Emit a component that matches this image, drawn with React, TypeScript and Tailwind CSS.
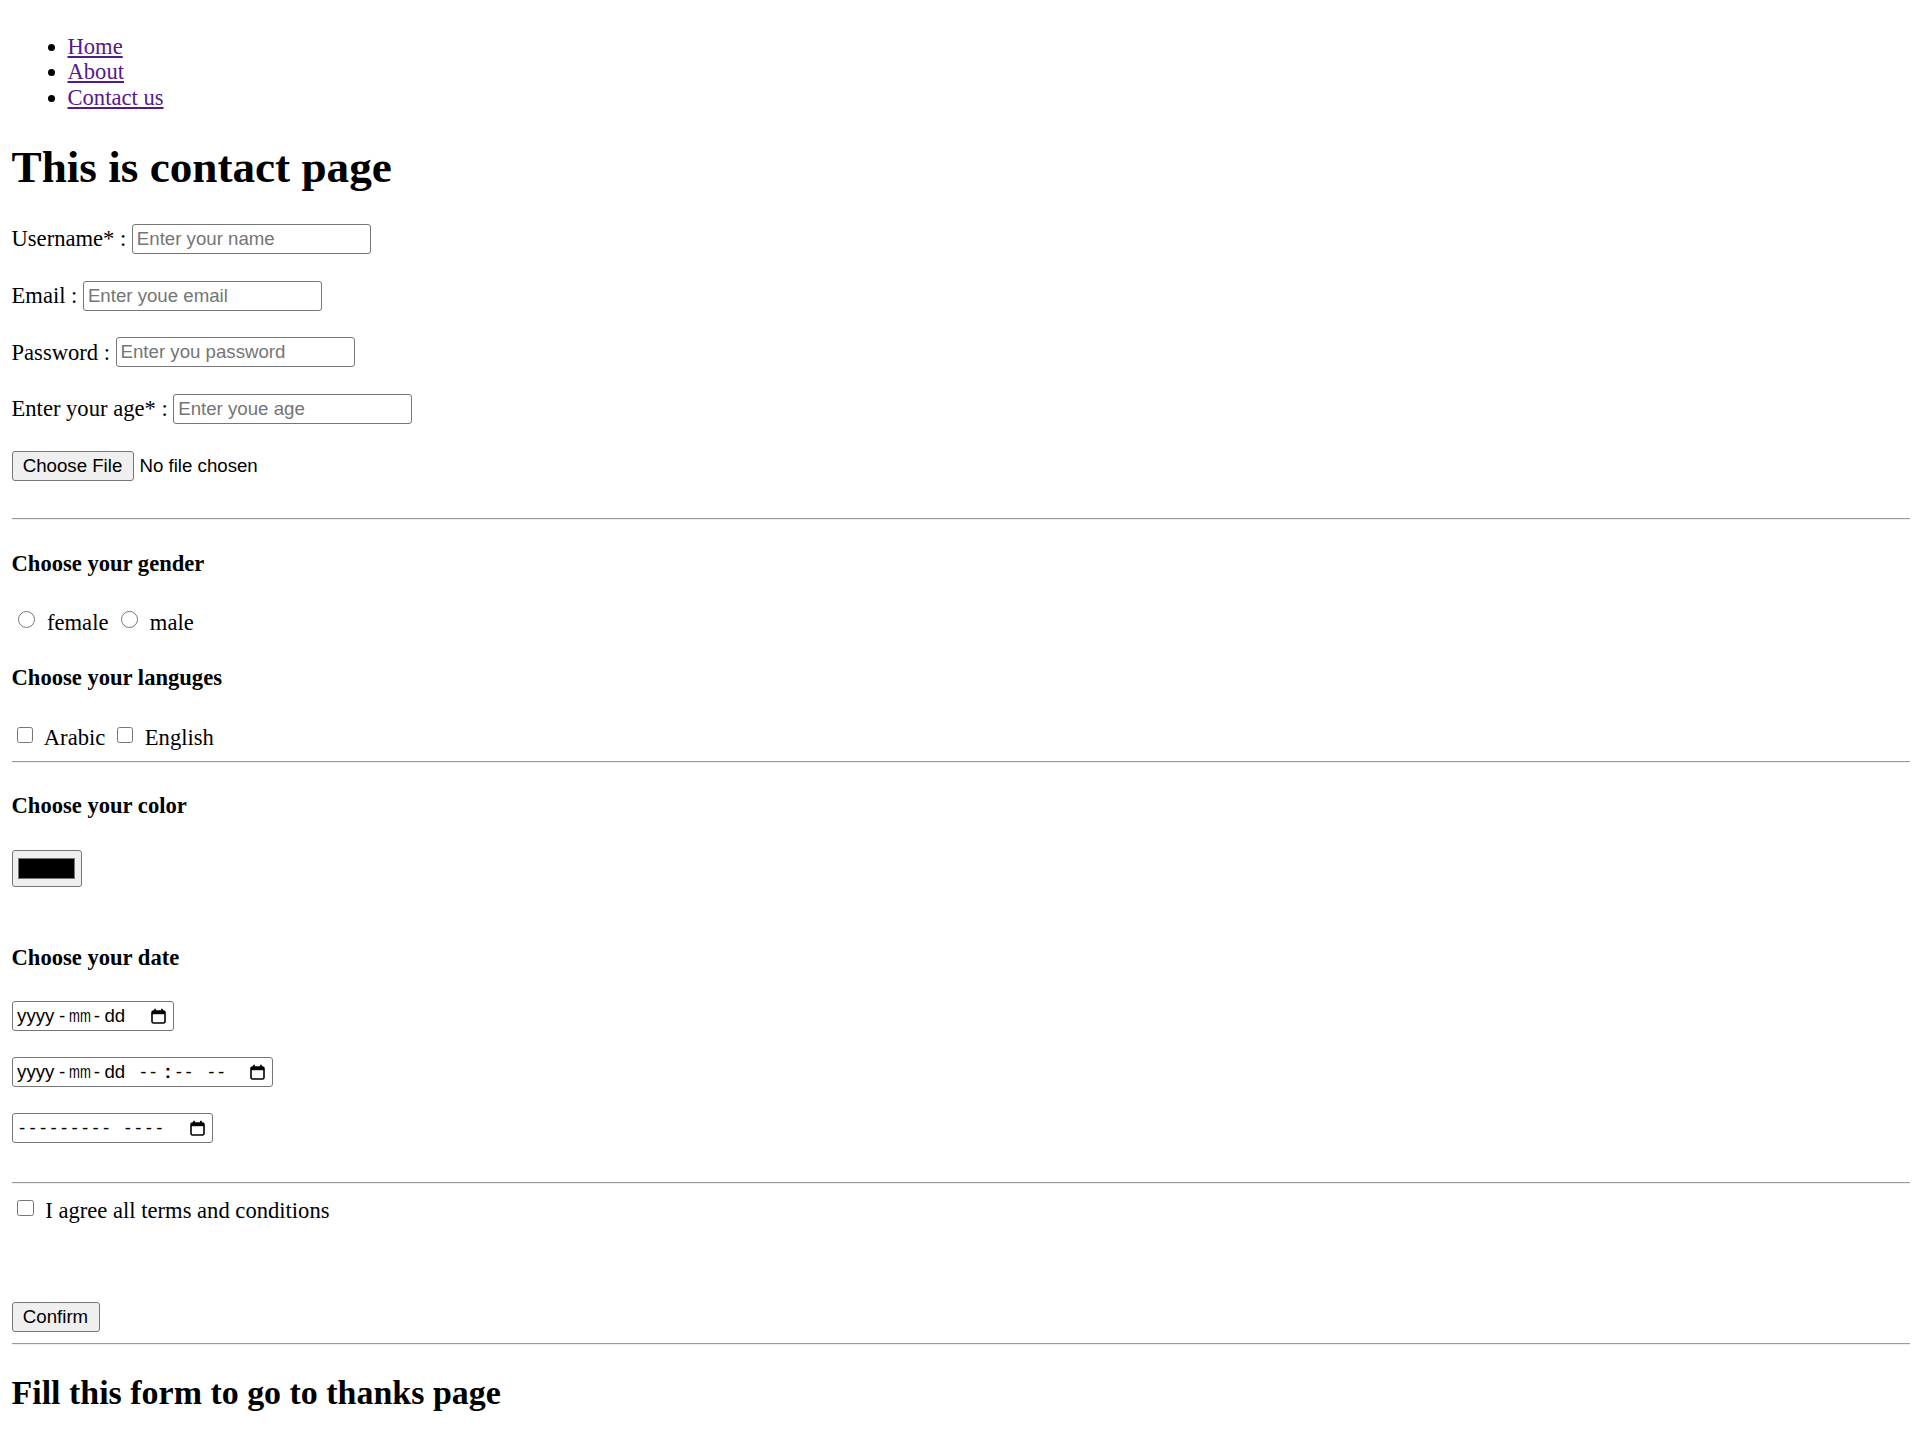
import React from "react";

// fonts: Times-like page text, Arial-like form controls
const sans = "font-['Liberation_Sans',Arial,sans-serif] text-[18.67px] text-black";
const field =
  "h-[30px] w-[239px] rounded-[3px] border border-[#767676] bg-white px-[4px] outline-none placeholder:text-[#757575] " +
  sans;
const heading = "font-bold leading-[25.7px]";
const rule = "h-[2px] w-full border-t border-b border-t-[#9a9a9a] border-b-[#eeeeee]";
const button = "rounded-[3px] border border-[#767676] bg-[#efefef] " + sans;
const check = "h-[16px] w-[16px] appearance-none rounded-[2.5px] border border-[#767676] bg-white";
const radio = "h-[16.7px] w-[16.7px] appearance-none rounded-full border border-[#767676] bg-white";
const dateBox = "flex h-[29.5px] items-center rounded-[3px] border border-[#767676] bg-white " + sans;

const CalendarIcon = () => (
  <svg width="15" height="16" viewBox="0 0 15 16" className="shrink-0">
    <rect x="1" y="3" width="13" height="12" rx="1.6" fill="none" stroke="#000" strokeWidth="1.6" />
    <rect x="1" y="3" width="13" height="3.2" fill="#000" />
    <rect x="3.2" y="0.8" width="1.7" height="3" fill="#000" />
    <rect x="10.1" y="0.8" width="1.7" height="3" fill="#000" />
  </svg>
);

const Ymd = () => (
  <>
    <span className="ml-[4.6px]">yyyy</span>
    <span className="ml-[4.5px]">-</span>
    <span className="ml-[3.5px] inline-block origin-left scale-x-[0.7]">mm</span>
    <span className="ml-[-6px]">-</span>
    <span className="ml-[4.5px]">dd</span>
  </>
);

export default function App() {
  return (
    <div className="min-h-screen bg-white px-[11.5px] pb-[40px] font-['Liberation_Serif','Times_New_Roman',serif] text-[22.6px] leading-[25.7px] text-black">
      <div className="flex flex-col items-start">
        <ul className="mt-[33.6px] list-disc pl-[56px] leading-[25.7px]">
          <li>
            <a href="#" className="text-[#551a8b] underline">Home</a>
          </li>
          <li>
            <a href="#" className="text-[#551a8b] underline">About</a>
          </li>
          <li>
            <a href="#" className="text-[#551a8b] underline">Contact us</a>
          </li>
        </ul>

        <h1 className="mt-[31.7px] text-[45.2px] font-bold leading-[51.5px]">This is contact page</h1>

        <div className="mt-[30.4px] flex h-[30px] items-center">
          <span>Username* :</span>
          <input className={`ml-[5.5px] ${field}`} placeholder="Enter your name" />
        </div>
        <div className="mt-[26.6px] flex h-[30px] items-center">
          <span>Email :</span>
          <input className={`ml-[5.5px] ${field}`} placeholder="Enter youe email" />
        </div>
        <div className="mt-[26.6px] flex h-[30px] items-center">
          <span>Password :</span>
          <input className={`ml-[5.5px] ${field}`} placeholder="Enter you password" type="password" />
        </div>
        <div className="mt-[26.6px] flex h-[30px] items-center">
          <span>Enter your age* :</span>
          <input className={`ml-[5.5px] ${field}`} placeholder="Enter youe age" />
        </div>
        <div className="mt-[26.6px] flex h-[30px] items-center">
          <button className={`h-[30px] w-[122px] ${button}`}>Choose File</button>
          <span className={`ml-[6px] ${sans}`}>No file chosen</span>
        </div>

        <hr className={`mt-[37.6px] ${rule}`} />

        <h4 className={`mt-[31px] ${heading}`}>Choose your gender</h4>
        <div className="mt-[32.6px] flex items-center">
          <input type="radio" name="gender" className={`mb-[6px] ml-[6.8px] ${radio}`} />
          <span className="ml-[12px]">female</span>
          <input type="radio" name="gender" className={`mb-[6px] ml-[13px] ${radio}`} />
          <span className="ml-[11.7px]">male</span>
        </div>

        <h4 className={`mt-[29.3px] ${heading}`}>Choose your languges</h4>
        <div className="mt-[34.3px] flex items-center">
          <input type="checkbox" className={`mb-[5px] ml-[5.8px] ${check}`} />
          <span className="ml-[10.5px]">Arabic</span>
          <input type="checkbox" className={`mb-[5px] ml-[12px] ${check}`} />
          <span className="ml-[11.5px]">English</span>
        </div>

        <hr className={`mt-[10.7px] ${rule}`} />

        <h4 className={`mt-[29.9px] ${heading}`}>Choose your color</h4>
        <button className="mt-[31.4px] flex h-[37.5px] w-[70px] items-center justify-center rounded-[3px] border border-[#767676] bg-[#efefef]">
          <span className="block h-[20.7px] w-[56.4px] border border-[#777777] bg-black" />
        </button>

        <h4 className={`mt-[57.1px] ${heading}`}>Choose your date</h4>
        <div className={`mt-[31px] w-[162px] ${dateBox}`}>
          <Ymd />
          <span className="flex-1" />
          <span className="mr-[7px]">
            <CalendarIcon />
          </span>
        </div>
        <div className={`mt-[26.5px] w-[261px] ${dateBox}`}>
          <Ymd />
          <span className="ml-[15px] tracking-[3.5px]">--</span>
          <span className="ml-[5px] font-bold">:</span>
          <span className="ml-[5px] tracking-[3.5px]">--</span>
          <span className="ml-[13px] tracking-[3.5px]">--</span>
          <span className="flex-1" />
          <span className="mr-[7px]">
            <CalendarIcon />
          </span>
        </div>
        <div className={`mt-[26.5px] w-[201px] ${dateBox}`}>
          <span className="ml-[6.5px] tracking-[4.3px]">---------</span>
          <span className="ml-[11px] tracking-[4.3px]">----</span>
          <span className="flex-1" />
          <span className="mr-[7px]">
            <CalendarIcon />
          </span>
        </div>

        <hr className={`mt-[38.9px] ${rule}`} />

        <div className="mt-[14.2px] flex items-center">
          <input type="checkbox" className="mb-[5px] ml-[5.8px] h-[16.7px] w-[16.7px] appearance-none rounded-[2.5px] border border-[#767676] bg-white" />
          <span className="ml-[11.3px]">I agree all terms and conditions</span>
        </div>

        <button className={`mt-[78.7px] h-[29.4px] w-[88px] ${button}`}>Confirm</button>

        <hr className={`mt-[11.6px] ${rule}`} />

        <h2 className="mt-[28.4px] text-[33.95px] font-bold leading-[38.6px]">Fill this form to go to thanks page</h2>
      </div>
    </div>
  );
}
